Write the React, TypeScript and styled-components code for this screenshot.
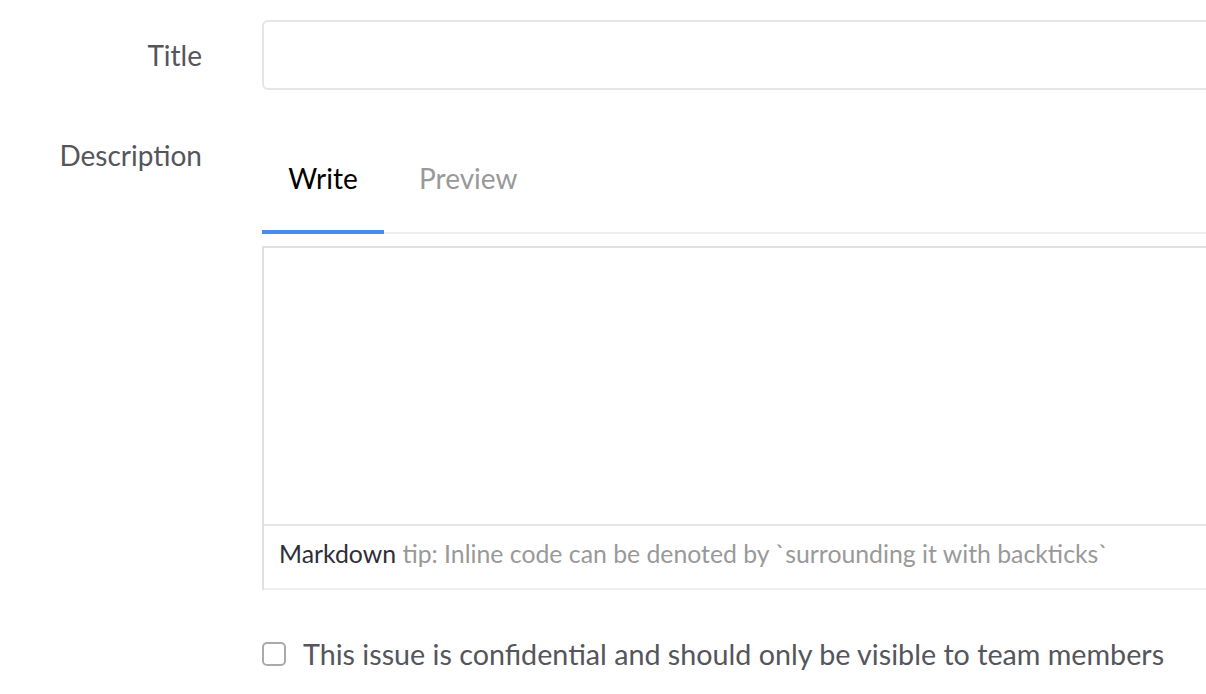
import React from "react";
import styled, { createGlobalStyle } from "styled-components";

const Global = createGlobalStyle`
  html, body { margin: 0; padding: 0; background: #fff; overflow: hidden; }
  body { font-family: Lato, "Open Sans", sans-serif; }
`;

const Form = styled.form`
  width: 1400px;
  display: grid;
  grid-template-columns: 202px 1fr;
  column-gap: 60px;
  padding-top: 20px;
`;

const Label = styled.label<{ $top: number }>`
  text-align: right;
  font-size: 28px;
  line-height: 1;
  color: #55555c;
  padding-top: ${(p) => p.$top}px;
`;

const Field = styled.div<{ $mb?: number }>`
  margin-bottom: ${(p) => p.$mb ?? 0}px;
`;

const TextInput = styled.input`
  display: block;
  box-sizing: border-box;
  width: 100%;
  height: 70px;
  border: 2px solid #e5e5e5;
  border-radius: 6px;
  background: #fff;
  outline: none;
`;

const Tabs = styled.div`
  display: flex;
  border-bottom: 2px solid #eee;
  height: 112px;
  box-sizing: border-box;
  margin-bottom: 12px;
`;

const Tab = styled.div<{ $active?: boolean }>`
  box-sizing: border-box;
  width: ${(p) => (p.$active ? 122 : 160)}px;
  height: 112px;
  display: flex;
  align-items: flex-start;
  justify-content: ${(p) => (p.$active ? "center" : "flex-start")};
  padding-left: ${(p) => (p.$active ? 0 : 35)}px;
  padding-top: 42px;
  font-size: 28px;
  line-height: 1;
  color: ${(p) => (p.$active ? "#000" : "#999")};
  border-bottom: 4px solid ${(p) => (p.$active ? "#4a8bee" : "transparent")};
`;

const Editor = styled.div`
  border-top: 2px solid #e0e0e0;
  border-left: 2px solid #e0e0e0;
`;

const TextArea = styled.textarea`
  display: block;
  box-sizing: border-box;
  width: 100%;
  height: 278px;
  border: none;
  border-bottom: 2px solid #e5e5e5;
  resize: none;
  outline: none;
  background: #fff;
`;

const Tip = styled.div`
  height: 64px;
  box-sizing: border-box;
  padding: 13px 0 0 15px;
  font-size: 24.8px;
  line-height: 30px;
  color: #999;
  border-bottom: 2px solid #eee;
`;

const Strong = styled.span`
  color: #2e2e38;
`;

const CheckRow = styled.label`
  display: flex;
  align-items: center;
  gap: 17px;
  margin-top: 47px;
  font-size: 28.7px;
  line-height: 34px;
  color: #55555c;
`;

const Box = styled.span`
  width: 24px;
  height: 24px;
  box-sizing: border-box;
  border: 2px solid #aaa;
  border-radius: 5px;
  background: #fff;
  flex-shrink: 0;
`;

export default function App() {
  return (
    <>
      <Global />
      <Form>
        <Label $top={21}>Title</Label>
        <Field $mb={32}>
          <TextInput type="text" />
        </Field>
        <Label $top={19}>Description</Label>
        <Field>
          <Tabs>
            <Tab $active>Write</Tab>
            <Tab>Preview</Tab>
          </Tabs>
          <Editor>
            <TextArea />
            <Tip>
              <Strong>Markdown</Strong> tip: Inline code can be denoted by `surrounding it with backticks`
            </Tip>
          </Editor>
          <CheckRow>
            <Box />
            This issue is confidential and should only be visible to team members
          </CheckRow>
        </Field>
      </Form>
    </>
  );
}
